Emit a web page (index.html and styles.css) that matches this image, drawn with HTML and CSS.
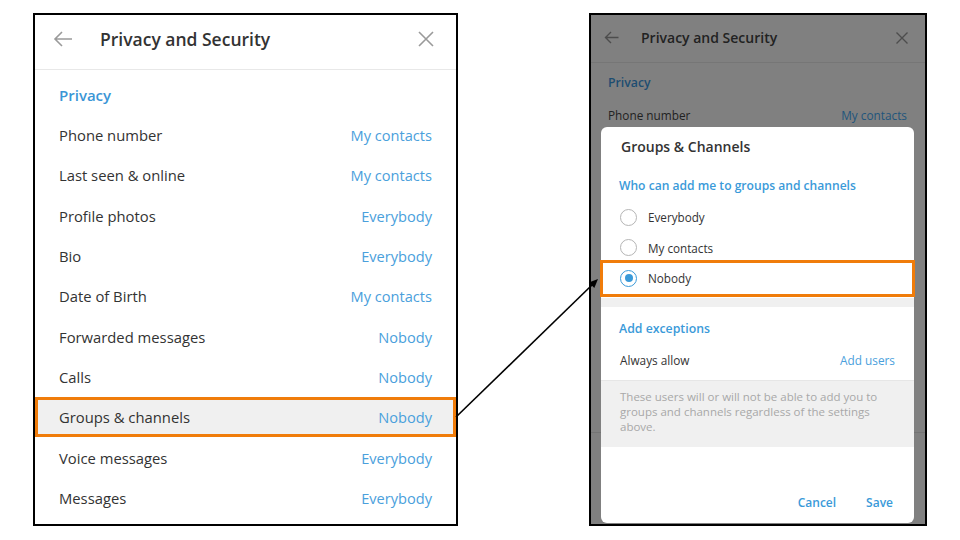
FILE: index.html
```html
<!DOCTYPE html>
<html>
<head>
<meta charset="utf-8">
<link rel="stylesheet" href="styles.css">
</head>
<body>
<div class="page">
  <section class="panel panel-main">
    <header class="hdr">
      <svg class="ico-back" width="20" height="20" viewBox="0 0 20 20"><path d="M19 10H2M9 3L2 10L9 17" fill="none" stroke="#9a9a9a" stroke-width="1.6"/></svg>
      <h1 class="hdr-title">Privacy and Security</h1>
      <svg class="ico-close" width="16" height="16" viewBox="0 0 16 16"><path d="M1 1L15 15M15 1L1 15" fill="none" stroke="#9a9a9a" stroke-width="1.6"/></svg>
    </header>
    <div class="sec-title">Privacy</div>
    <div class="row"><span>Phone number</span><span class="val">My contacts</span></div>
    <div class="row"><span>Last seen &amp; online</span><span class="val">My contacts</span></div>
    <div class="row"><span>Profile photos</span><span class="val">Everybody</span></div>
    <div class="row"><span>Bio</span><span class="val">Everybody</span></div>
    <div class="row"><span>Date of Birth</span><span class="val">My contacts</span></div>
    <div class="row"><span>Forwarded messages</span><span class="val">Nobody</span></div>
    <div class="row"><span>Calls</span><span class="val">Nobody</span></div>
    <div class="row row-hl"><span>Groups &amp; channels</span><span class="val">Nobody</span></div>
    <div class="row"><span>Voice messages</span><span class="val">Everybody</span></div>
    <div class="row"><span>Messages</span><span class="val">Everybody</span></div>
  </section>

  <section class="panel panel-dim">
    <header class="dhdr">
      <svg width="15" height="15" viewBox="0 0 15 15"><path d="M14.5 7.5H1.5M7 2L1.5 7.5L7 13" fill="none" stroke="#4d4d4d" stroke-width="1.4"/></svg>
      <h2 class="dhdr-title">Privacy and Security</h2>
      <svg class="dclose" width="12" height="12" viewBox="0 0 12 12"><path d="M0.5 0.5L11.5 11.5M11.5 0.5L0.5 11.5" fill="none" stroke="#4d4d4d" stroke-width="1.4"/></svg>
    </header>
    <div class="dsec">Privacy</div>
    <div class="drow"><span>Phone number</span><span class="dval">My contacts</span></div>
    <div class="dbody"></div>

    <div class="modal">
      <div class="m-title">Groups &amp; Channels</div>
      <div class="m-sec">Who can add me to groups and channels</div>
      <div class="radio"><span class="circ"></span><span>Everybody</span></div>
      <div class="radio"><span class="circ"></span><span>My contacts</span></div>
      <div class="radio radio-hl"><span class="circ on"></span><span>Nobody</span></div>
      <div class="m-band"></div>
      <div class="m-sec2">Add exceptions</div>
      <div class="m-row"><span>Always allow</span><span class="m-link">Add users</span></div>
      <div class="m-note">These users will or will not be able to add you to groups and channels regardless of the settings above.</div>
      <div class="m-foot"><span class="btn">Cancel</span><span class="btn">Save</span></div>
    </div>
  </section>
</div>
<svg class="arrow" width="960" height="540" viewBox="0 0 960 540">
  <line x1="456" y1="417" x2="592" y2="285" stroke="#000" stroke-width="1.6"/>
  <polygon points="598,279 594.3,288.1 588.8,282.4" fill="#000"/>
</svg>
</body>
</html>
```

FILE: styles.css
```css
* { box-sizing: border-box; margin: 0; padding: 0; }
html, body { width: 960px; height: 540px; background: #fff; overflow: hidden; }
body { font-family: "Open Sans", "Liberation Sans", sans-serif; position: relative; }

.page { display: flex; gap: 131px; padding: 13px 0 0 33px; }

.panel { border: 2px solid #000; height: 513px; }

/* left panel */
.panel-main { width: 425px; background: #fff; }
.hdr { height: 55px; border-bottom: 1px solid #e8e8e8; display: flex; align-items: center; padding: 0 22px 6px 18px; }
.ico-back { flex: none; }
.hdr-title { font-size: 17.5px; font-weight: 600; color: #333; margin-left: 27px; flex: 1; }
.ico-close { flex: none; }
.sec-title { padding: 15px 24px 10px; line-height: 20px; font-size: 15px; font-weight: 600; color: #3a96d6; }
.row { height: 40.3px; display: flex; align-items: center; justify-content: space-between; padding: 0 24px; font-size: 14.8px; color: #333; }
.val { color: #4aa0dc; font-size: 14.6px; }
.row-hl { background: #f0f0f0; outline: 3px solid #f07c0a; outline-offset: -3px; }

/* right panel */
.panel-dim { width: 338px; background: #808080; position: relative; overflow: hidden; }
.dhdr { height: 48px; border-bottom: 1px solid #767676; display: flex; align-items: center; padding: 0 17px 2px 13px; }
.dhdr-title { font-size: 14px; font-weight: 600; color: #222; margin-left: 22px; flex: 1; }
.dsec { padding: 11px 17px 7px; line-height: 18px; font-size: 12.3px; font-weight: 600; color: #1d4d71; }
.drow { height: 32px; display: flex; align-items: center; justify-content: space-between; padding: 0 18px 0 17px; font-size: 11.8px; color: #222; }
.dval { color: #22557c; }
.dbody { height: 302px; border-bottom: 1px solid #747474; }

.modal { position: absolute; top: 112px; left: 10px; right: 11px; bottom: 1px; background: #fff; border-radius: 6px; display: flex; flex-direction: column; }
.m-title { padding: 10px 20px 0; line-height: 20px; font-size: 14px; font-weight: 600; color: #333; }
.m-sec { padding: 19px 18px 0; line-height: 20px; font-size: 12.1px; font-weight: 600; color: #3a9ad9; margin-bottom: 6px; }
.radio { height: 30.5px; display: flex; align-items: center; padding-left: 19px; font-size: 11.7px; color: #333; position: relative; }
.circ { width: 17px; height: 17px; border-radius: 50%; border: 1.5px solid #b5b5b5; margin-right: 11px; display: flex; align-items: center; justify-content: center; }
.circ.on { border-color: #3a9ad9; }
.circ.on::after { content: ""; width: 8px; height: 8px; border-radius: 50%; background: #3a9ad9; }
.radio-hl::after { content: ""; position: absolute; top: -3px; bottom: -3.5px; left: -1px; right: -1px; border: 3px solid #f07c0a; }
.m-band { height: 9px; background: #f0f0f0; margin-top: 4px; }
.m-sec2 { padding: 13px 18px 0; line-height: 18px; font-size: 12.3px; font-weight: 600; color: #3a9ad9; margin-bottom: 7px; }
.m-row { height: 36px; display: flex; align-items: center; justify-content: space-between; padding: 0 19px 4px 19px; font-size: 11.8px; color: #333; border-bottom: 1px solid #e6e6e6; }
.m-link { color: #4aa0dc; }
.m-note { height: 66px; background: #f0f0f0; padding: 8px 30px 0 19px; font-size: 11.5px; line-height: 15px; color: #a8a8a8; }
.m-foot { margin-top: auto; display: flex; justify-content: flex-end; gap: 30px; padding: 0 21px 11px; line-height: 18px; }
.btn { font-size: 12px; font-weight: 600; color: #3a9ad9; }

.arrow { position: absolute; left: 0; top: 0; pointer-events: none; }
```
